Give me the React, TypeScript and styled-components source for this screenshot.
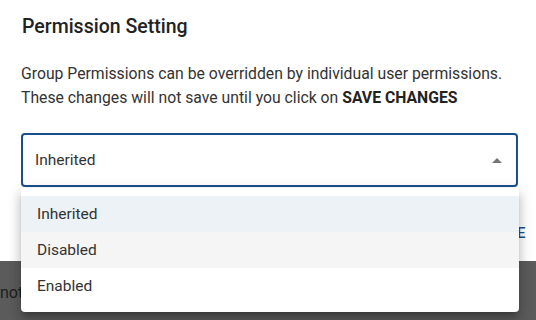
import React, { useState } from "react";
import styled, { createGlobalStyle } from "styled-components";

type Option = "INHERITED" | "DISABLED" | "ENABLED";

const OPTIONS: { value: Option; label: string }[] = [
  { value: "INHERITED", label: "Inherited" },
  { value: "DISABLED", label: "Disabled" },
  { value: "ENABLED", label: "Enabled" }
];

const GlobalStyle = createGlobalStyle`
  html, body {
    margin: 0;
    padding: 0;
    background: #ffffff;
    font-family: Roboto, "Liberation Sans", Arial, sans-serif;
    color: #222222;
  }
`;

const App: React.FC = () => {
  const [value, setValue] = useState<Option>("INHERITED");
  const [hovered, setHovered] = useState<Option>("DISABLED");
  const current = OPTIONS.find(o => o.value === value);

  return (
    <Page>
      <GlobalStyle />
      <Dialog>
        <Title>Permission Setting</Title>
        <Description>
          Group Permissions can be overridden by individual user permissions.
          <br />
          These changes will not save until you click on <strong>SAVE CHANGES</strong>
        </Description>
        <SelectWrap>
          <SelectBox>
            <span>{current?.label}</span>
            <Caret viewBox="0 0 10 5" aria-hidden>
              <path d="M0 5 L5 0 L10 5 Z" fill="#757575" />
            </Caret>
          </SelectBox>
          <Menu>
            {OPTIONS.map(o => (
              <MenuItem
                key={o.value}
                $selected={o.value === value}
                $hovered={o.value === hovered && o.value !== value}
                onMouseEnter={() => setHovered(o.value)}
                onClick={() => setValue(o.value)}
              >
                {o.label}
              </MenuItem>
            ))}
          </Menu>
        </SelectWrap>
        <Actions>
          <TextButton>CANCEL</TextButton>
          <TextButton>SAVE</TextButton>
        </Actions>
      </Dialog>
      <Backdrop>
        <BehindText>cannot change</BehindText>
      </Backdrop>
    </Page>
  );
};

export default App;

const Page = styled.div`
  width: 536px;
  height: 320px;
  overflow: hidden;
  display: flex;
  flex-direction: column;
`;

const Dialog = styled.div`
  background: #ffffff;
  padding: 14px 10px 0 21px;
  height: 261px;
  box-sizing: border-box;
  display: flex;
  flex-direction: column;
  position: relative;
  z-index: 2;
`;

const Title = styled.h2`
  margin: 0 0 0 1px;
  font-size: 19.5px;
  font-weight: 500;
  line-height: 26px;
  color: #222222;
`;

const Description = styled.p`
  margin: 22px 0 0;
  font-size: 15.75px;
  line-height: 24px;
  color: #333333;

  strong {
    font-weight: 700;
    color: #222222;
  }
`;

const SelectWrap = styled.div`
  position: relative;
  width: 497px;
  margin-top: 23px;
`;

const SelectBox = styled.div`
  height: 54px;
  box-sizing: border-box;
  border: 2px solid #1b4f8c;
  border-radius: 4px;
  display: flex;
  align-items: center;
  justify-content: space-between;
  padding: 0 14px 0 12px;
  font-size: 15.5px;
  color: #333333;
`;

const Caret = styled.svg`
  width: 10px;
  height: 5px;
`;

const Menu = styled.ul`
  position: absolute;
  top: 55px;
  left: 0;
  width: 498px;
  margin: 0;
  padding: 8px 0;
  list-style: none;
  background: #ffffff;
  border-radius: 4px;
  box-shadow: 0 5px 5px -3px rgba(0, 0, 0, 0.2), 0 8px 10px 1px rgba(0, 0, 0, 0.14),
    0 3px 14px 2px rgba(0, 0, 0, 0.12);
  z-index: 3;
`;

const MenuItem = styled.li<{ $selected: boolean; $hovered: boolean }>`
  height: 36px;
  display: flex;
  align-items: center;
  padding: 0 16px;
  font-size: 15.5px;
  color: #333333;
  cursor: pointer;
  background: ${p => (p.$selected ? "#edf2f7" : p.$hovered ? "#f5f5f5" : "#ffffff")};
`;

const Actions = styled.div`
  display: flex;
  justify-content: flex-end;
  gap: 8px;
  margin-top: 31px;
`;

const TextButton = styled.button`
  border: none;
  background: transparent;
  padding: 6px 0 6px 8px;
  font-family: Roboto, "Liberation Sans", Arial, sans-serif;
  font-size: 15px;
  font-weight: 500;
  letter-spacing: 0.4px;
  color: #1b4f8c;
`;

const Backdrop = styled.div`
  flex: 1;
  background: #5b5b5b;
  display: flex;
  align-items: center;
  padding-top: 4px;
  overflow: hidden;
`;

const BehindText = styled.span`
  margin-left: -26px;
  font-size: 16px;
  color: #1e1e1e;
  white-space: nowrap;
`;
